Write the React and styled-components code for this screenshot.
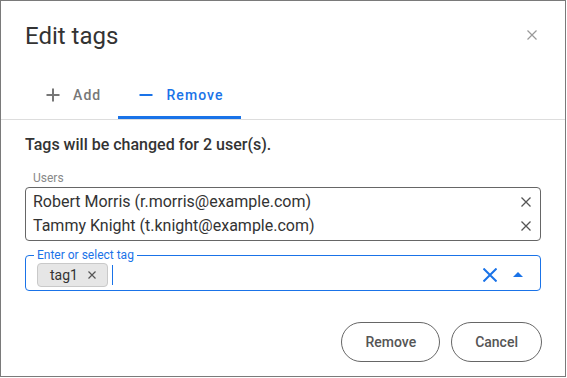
import React from "react";
import styled, { createGlobalStyle } from "styled-components";

const BLUE = "#1a73e8";

const Global = createGlobalStyle`
  html, body { margin: 0; padding: 0; background: #fff; }
  body { font-family: Roboto, "Noto Sans", Arial, sans-serif; }
  * { box-sizing: border-box; }
`;

const Cross = ({ size = 10, width = 1.5, color = "#555" }) => (
  <svg width={size} height={size} viewBox={`0 0 ${size} ${size}`}>
    <path d={`M0.5 0.5L${size - 0.5} ${size - 0.5}M${size - 0.5} 0.5L0.5 ${size - 0.5}`} stroke={color} strokeWidth={width} fill="none" />
  </svg>
);

const PlusIcon = ({ color }) => (
  <svg width="14" height="14" viewBox="0 0 14 14">
    <path d="M7 0.5V13.5M0.5 7H13.5" stroke={color} strokeWidth="2" fill="none" />
  </svg>
);

const MinusIcon = ({ color }) => (
  <svg width="14" height="14" viewBox="0 0 14 14">
    <path d="M0.5 7H13.5" stroke={color} strokeWidth="2" fill="none" />
  </svg>
);

const Caret = () => (
  <svg width="10" height="5" viewBox="0 0 10 5">
    <polygon points="0,5 5,0 10,5" fill={BLUE} />
  </svg>
);

export default function App() {
  const users = [
    "Robert Morris (r.morris@example.com)",
    "Tammy Knight (t.knight@example.com)",
  ];
  return (
    <>
      <Global />
      <Dialog>
        <Header>
          <Title>Edit tags</Title>
          <CloseBtn>
            <Cross size={10} width={1.2} color="#999" />
          </CloseBtn>
        </Header>
        <Tabs>
          <Tab>
            <PlusIcon color="#777" />
            Add
          </Tab>
          <Tab $active>
            <MinusIcon color={BLUE} />
            Remove
          </Tab>
        </Tabs>
        <Body>
          <Info>Tags will be changed for 2 user(s).</Info>
          <FieldLabel>Users</FieldLabel>
          <UsersBox>
            {users.map((u) => (
              <UserRow key={u}>
                {u}
                <Cross size={10} width={1.3} color="#555" />
              </UserRow>
            ))}
          </UsersBox>
          <TagField>
            <Legend>Enter or select tag</Legend>
            <TagRow>
              <Chip>
                tag1
                <Cross size={8} width={1.2} color="#555" />
              </Chip>
              <Cursor />
              <Spacer />
              <Cross size={14} width={2} color={BLUE} />
              <CaretBox>
                <Caret />
              </CaretBox>
            </TagRow>
          </TagField>
        </Body>
        <Footer>
          <PillButton>Remove</PillButton>
          <PillButton>Cancel</PillButton>
        </Footer>
      </Dialog>
    </>
  );
}

const Dialog = styled.div`
  width: 566px;
  height: 377px;
  border: 1px solid #7a7a7a;
  background: #fff;
  display: flex;
  flex-direction: column;
`;

const Header = styled.div`
  height: 70px;
  padding: 21px 28px 0 24px;
  display: flex;
  justify-content: space-between;
  align-items: flex-start;
`;

const Title = styled.h1`
  margin: 0;
  font-size: 24px;
  line-height: 28px;
  font-weight: 400;
  color: #333;
`;

const CloseBtn = styled.div`
  margin-top: 8px;
  display: flex;
`;

const Tabs = styled.div`
  display: flex;
  padding-left: 24px;
  border-bottom: 1px solid #ddd;
`;

const Tab = styled.div`
  height: 48px;
  display: flex;
  align-items: center;
  gap: 13px;
  padding: 3px 17px 0 21px;
  font-size: 14px;
  font-weight: 500;
  letter-spacing: 1.1px;
  color: ${(p) => (p.$active ? BLUE : "#777")};
  border-bottom: 3px solid ${(p) => (p.$active ? BLUE : "transparent")};
`;

const Body = styled.div`
  padding: 15px 24px 0 24px;
  display: flex;
  flex-direction: column;
`;

const Info = styled.div`
  font-size: 16px;
  line-height: 20px;
  font-weight: 500;
  color: #333;
`;

const FieldLabel = styled.div`
  margin-top: 16px;
  padding-left: 8px;
  font-size: 12px;
  line-height: 14px;
  color: #888;
`;

const UsersBox = styled.div`
  margin-top: 2px;
  border: 1px solid #666;
  border-radius: 4px;
  padding: 2px 9px 2px 7px;
`;

const UserRow = styled.div`
  display: flex;
  justify-content: space-between;
  align-items: center;
  font-size: 16px;
  line-height: 24px;
  color: #333;
`;

const TagField = styled.fieldset`
  margin: 7px 0 0 0;
  border: 1px solid ${BLUE};
  border-radius: 4px;
  padding: 1px 17px 3px 11px;
  min-width: 0;
`;

const Legend = styled.legend`
  margin-left: -3px;
  padding: 0 3px;
  font-size: 12px;
  line-height: 14px;
  color: ${BLUE};
`;

const TagRow = styled.div`
  display: flex;
  align-items: center;
  height: 24px;
`;

const Chip = styled.div`
  height: 24px;
  display: flex;
  align-items: center;
  gap: 10px;
  padding: 0 11px 0 12px;
  background: #e6e6e6;
  border: 1px solid #c9c9c9;
  border-radius: 4px;
  font-size: 14px;
  color: #333;
`;

const Cursor = styled.div`
  width: 1px;
  height: 20px;
  margin-left: 4px;
  background: ${BLUE};
`;

const Spacer = styled.div`
  flex: 1;
`;

const CaretBox = styled.div`
  display: flex;
  margin-left: 16px;
  margin-top: -2px;
`;

const Footer = styled.div`
  margin-top: auto;
  padding: 0 23px 14px 0;
  display: flex;
  justify-content: flex-end;
  gap: 11px;
`;

const PillButton = styled.button`
  height: 40px;
  padding: 0 23px;
  border: 1px solid #666;
  border-radius: 20px;
  background: #fff;
  font-family: Roboto, sans-serif;
  font-size: 14px;
  font-weight: 500;
  color: #555;
`;
